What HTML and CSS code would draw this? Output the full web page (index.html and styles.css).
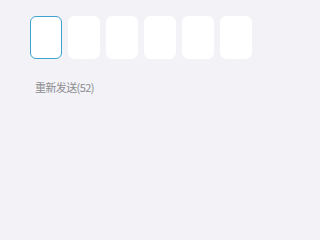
FILE: index.html
```html
<!DOCTYPE html>
<html>
<head>
<meta charset="utf-8">
<link rel="stylesheet" href="styles.css">
</head>
<body>
<div class="page">
  <div class="code-row">
    <div class="cell active"></div>
    <div class="cell"></div>
    <div class="cell"></div>
    <div class="cell"></div>
    <div class="cell"></div>
    <div class="cell"></div>
  </div>
  <div class="resend">重新发送(52)</div>
</div>
</body>
</html>
```
FILE: styles.css
```css
html, body {
  margin: 0;
  padding: 0;
  background: #f2f2f7;
  width: 285px;
  height: 214px;
  overflow: hidden;
}
.page {
  padding: 16px 0 0 30px;
  font-family: "Noto Sans CJK SC", "Noto Sans", sans-serif;
}
.code-row {
  display: flex;
  gap: 6px;
}
.cell {
  width: 32px;
  height: 43px;
  box-sizing: border-box;
  background: #ffffff;
  border-radius: 6px;
  border: 1px solid #ffffff;
}
.cell.active {
  border-color: #3fa3cf;
}
.resend {
  margin-top: 20px;
  margin-left: 5px;
  font-size: 11px;
  line-height: 16px;
  letter-spacing: -0.6px;
  color: #8c8c90;
}
```
